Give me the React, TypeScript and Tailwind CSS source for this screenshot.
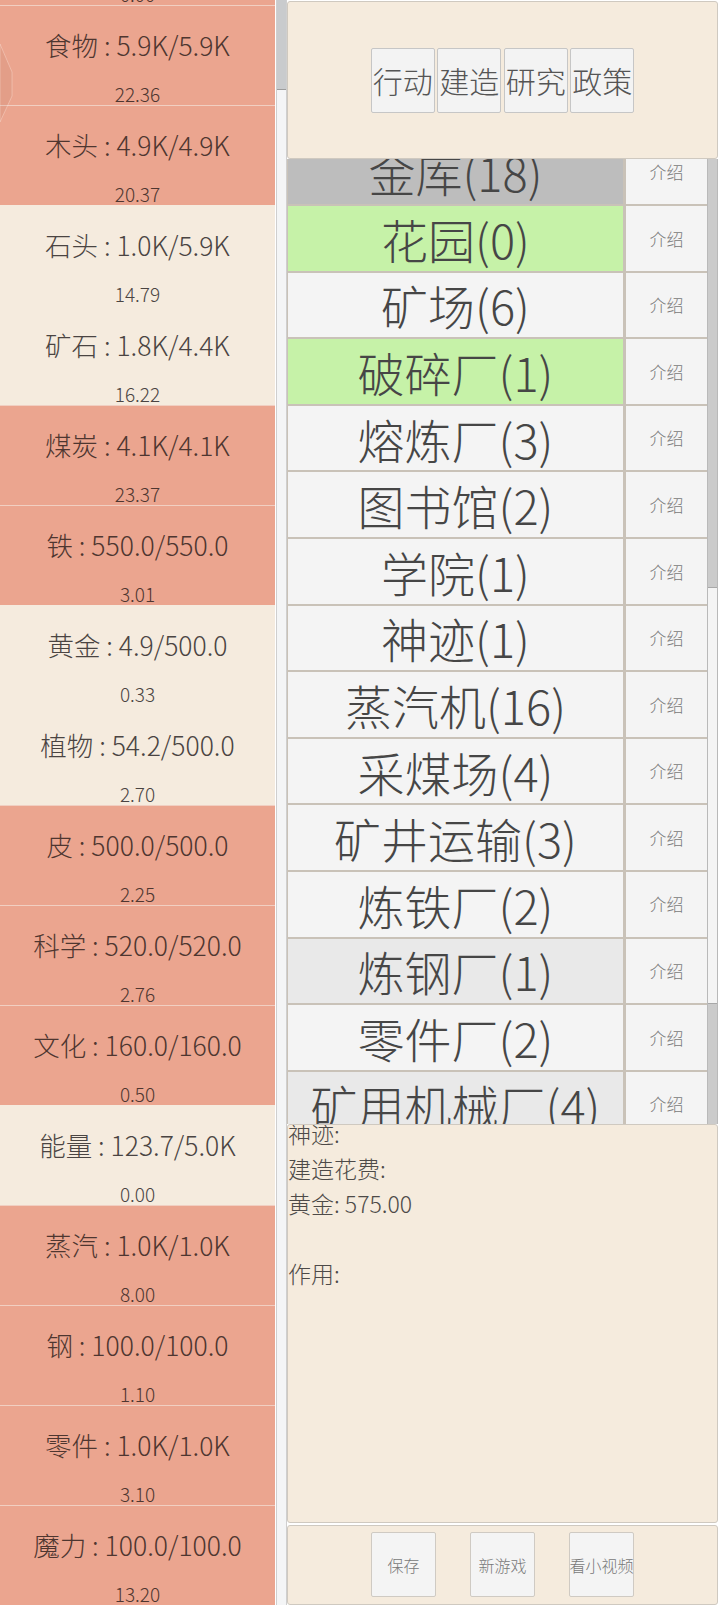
import React from "react";

type Res = { label: string; rate: string; full: boolean };

const resources: Res[] = [
  { label: "木材 : 0.0/0.0", rate: "0.00", full: true },
  { label: "食物 : 5.9K/5.9K", rate: "22.36", full: true },
  { label: "木头 : 4.9K/4.9K", rate: "20.37", full: true },
  { label: "石头 : 1.0K/5.9K", rate: "14.79", full: false },
  { label: "矿石 : 1.8K/4.4K", rate: "16.22", full: false },
  { label: "煤炭 : 4.1K/4.1K", rate: "23.37", full: true },
  { label: "铁 : 550.0/550.0", rate: "3.01", full: true },
  { label: "黄金 : 4.9/500.0", rate: "0.33", full: false },
  { label: "植物 : 54.2/500.0", rate: "2.70", full: false },
  { label: "皮 : 500.0/500.0", rate: "2.25", full: true },
  { label: "科学 : 520.0/520.0", rate: "2.76", full: true },
  { label: "文化 : 160.0/160.0", rate: "0.50", full: true },
  { label: "能量 : 123.7/5.0K", rate: "0.00", full: false },
  { label: "蒸汽 : 1.0K/1.0K", rate: "8.00", full: true },
  { label: "钢 : 100.0/100.0", rate: "1.10", full: true },
  { label: "零件 : 1.0K/1.0K", rate: "3.10", full: true },
  { label: "魔力 : 100.0/100.0", rate: "13.20", full: true },
];

type Building = { name: string; tone: "gray" | "green" | "plain" | "dim" };

const buildings: Building[] = [
  { name: "金库(18)", tone: "gray" },
  { name: "花园(0)", tone: "green" },
  { name: "矿场(6)", tone: "plain" },
  { name: "破碎厂(1)", tone: "green" },
  { name: "熔炼厂(3)", tone: "plain" },
  { name: "图书馆(2)", tone: "plain" },
  { name: "学院(1)", tone: "plain" },
  { name: "神迹(1)", tone: "plain" },
  { name: "蒸汽机(16)", tone: "plain" },
  { name: "采煤场(4)", tone: "plain" },
  { name: "矿井运输(3)", tone: "plain" },
  { name: "炼铁厂(2)", tone: "plain" },
  { name: "炼钢厂(1)", tone: "dim" },
  { name: "零件厂(2)", tone: "plain" },
  { name: "矿用机械厂(4)", tone: "dim" },
];

const toneClass = {
  gray: "bg-[#bdbdbd]",
  green: "bg-[#c6f2a8]",
  plain: "bg-[#f4f4f4]",
  dim: "bg-[#e9e9e9]",
};

const tabs = ["行动", "建造", "研究", "政策"];
const bottomButtons = ["保存", "新游戏", "看小视频"];

const ResourceRow = ({ res }: { res: Res }) => (
  <div
    className={`h-[100px] shrink-0 flex flex-col items-center border-t ${
      res.full
        ? "bg-[#eba58f] text-[#4e3630] border-[#f1cfc2]"
        : "bg-[#f5ebde] text-[#4a4442] border-[#f5ebde]"
    }`}
  >
    <div className="pt-[24px] text-[26.5px] leading-[30px] whitespace-nowrap">{res.label}</div>
    <div className="mt-[23px] text-[19px] leading-[22px]">{res.rate}</div>
  </div>
);

export default function App() {
  return (
    <div className="w-[720px] h-[1605px] flex bg-white overflow-hidden font-light font-['Noto_Sans_CJK_SC','Noto_Sans',sans-serif]">
      {/* resources */}
      <div className="relative w-[275px] h-full overflow-hidden bg-[#f5ebde]">
        <div className="flex flex-col -mt-[95px]">
          {resources.map((r, i) => (
            <ResourceRow key={i} res={r} />
          ))}
        </div>
        <svg className="absolute left-0 top-[44px]" width="16" height="80" viewBox="0 0 16 80">
          <polygon points="0,0 12,28 12,52 0,78" fill="rgba(140,80,70,0.08)" stroke="rgba(255,235,225,0.35)" strokeWidth="1" />
        </svg>
      </div>

      {/* left scrollbar */}
      <div className="ml-px w-[11px] h-full bg-[#f4f5f6] border-x border-[#cfcfcf]">
        <div className="h-[90px] bg-[#c9cbcd] border-b border-[#9d9d9d]" />
      </div>

      {/* right side */}
      <div className="w-[431px] h-full flex flex-col">
        <div className="mt-px h-[158px] shrink-0 rounded-[3px] border border-[#cfc9c0] bg-[#f5ebdd] flex items-center justify-center gap-[2.5px]">
          {tabs.map((t) => (
            <button
              key={t}
              className="w-[64px] h-[65px] p-0 flex items-center justify-center whitespace-nowrap rounded-[2px] border border-[#c6c6c6] bg-[#f3f3f3] text-[30px] leading-none text-[#555]"
            >
              {t}
            </button>
          ))}
        </div>

        <div className="h-[965px] shrink-0 flex">
          <div className="w-[420px] h-full overflow-hidden bg-[#c9c2b8] pl-px">
            <div className="flex flex-col gap-[2px] -mt-[19.6px]">
              {buildings.map((b) => (
                <div key={b.name} className="h-[64.6px] shrink-0 flex gap-[3px]">
                  <div
                    className={`flex-1 flex items-center justify-center overflow-hidden whitespace-nowrap text-[47px] leading-none text-[#464646] ${toneClass[b.tone]}`}
                  >
                    {b.name}
                  </div>
                  <div className="w-[81px] flex items-center justify-center bg-[#f4f4f4] text-[17px] text-[#7a7a7a]">
                    介绍
                  </div>
                </div>
              ))}
            </div>
          </div>
          <div className="w-[11px] h-full flex flex-col bg-[#f4f4f4] border-x border-[#b9b9b9]">
            <div className="h-[429px] bg-[#cbcbcb] border-b border-[#a8a8a8]" />
            <div className="h-[415px]" />
            <div className="flex-1 bg-[#cbcbcb] border-t border-[#a8a8a8]" />
          </div>
        </div>

        <div className="h-[399px] shrink-0 overflow-hidden rounded-[3px] border border-[#cfc9c0] bg-[#f5ebdd] text-[23px] leading-[35px] text-[#4d4a48]">
          <div className="-mt-[9px]">
            <div>神迹:</div>
            <div>建造花费:</div>
            <div>黄金: 575.00</div>
            <div>&nbsp;</div>
            <div>作用:</div>
          </div>
        </div>

        <div className="mt-[2px] flex-1 rounded-[3px] border border-[#cfc9c0] bg-[#f5ebdd] flex justify-center gap-[34px] pt-[6px]">
          {bottomButtons.map((t) => (
            <button
              key={t}
              className="w-[65px] h-[65px] p-0 flex items-center justify-center whitespace-nowrap rounded-[2px] border border-[#cfcac3] bg-[#f4f4f4] text-[16px] text-[#787878]"
            >
              {t}
            </button>
          ))}
        </div>
      </div>
    </div>
  );
}
